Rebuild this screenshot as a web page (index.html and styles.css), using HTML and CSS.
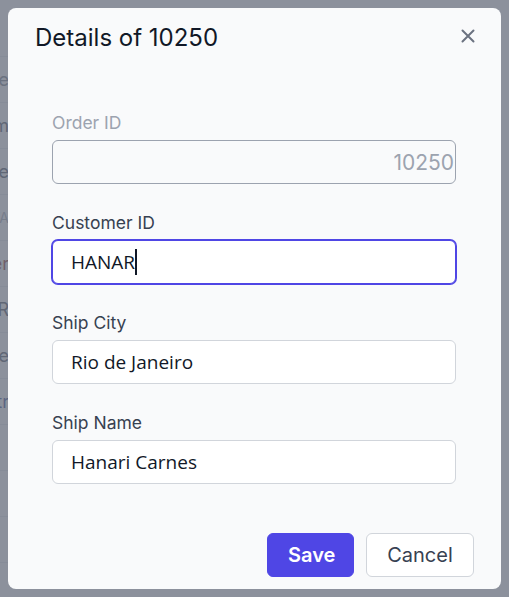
FILE: index.html
```html
<!DOCTYPE html>
<html lang="en">
<head>
<meta charset="utf-8">
<title>Details of 10250</title>
<link rel="stylesheet" href="styles.css">
</head>
<body>
<div class="page">
  <div class="grid">
    <div class="row"><span class="cell c-gray">Title</span></div>
    <div class="row"><span class="cell c-dark">Tom</span></div>
    <div class="row"><span class="cell c-dark">Hane</span></div>
    <div class="row"><span class="cell c-light">VICTA</span></div>
    <div class="row"><span class="cell c-red">Suprer</span></div>
    <div class="row"><span class="cell c-dark">HILAR</span></div>
    <div class="row"><span class="cell c-dark">Ernste</span></div>
    <div class="row"><span class="cell c-blue">Centr</span></div>
    <div class="row"><span class="cell c-dark"></span></div>
    <div class="row"><span class="cell c-dark"></span></div>
    <div class="row"><span class="cell c-dark"></span></div>
    <div class="row"><span class="cell c-dark"></span></div>
  </div>
</div>
<div class="overlay"></div>
<div class="modal" role="dialog" aria-labelledby="dlg-title">
  <div class="modal-header">
    <h2 id="dlg-title" class="modal-title">Details of 10250</h2>
    <button class="close-btn" aria-label="Close">
      <svg width="14" height="14" viewBox="0 0 14 14" fill="none" stroke="currentColor" stroke-width="2" stroke-linecap="round"><path d="M1.5 1.5L12.5 12.5M12.5 1.5L1.5 12.5"/></svg>
    </button>
  </div>
  <form class="modal-body">
    <div class="field">
      <label class="label label-disabled" for="f-order">Order ID</label>
      <input id="f-order" class="input input-disabled input-num" value="10250" disabled>
    </div>
    <div class="field">
      <label class="label" for="f-cust">Customer ID</label>
      <div class="input input-focus"><span class="val">HANAR</span><span class="caret"></span></div>
    </div>
    <div class="field">
      <label class="label" for="f-city">Ship City</label>
      <input id="f-city" class="input" value="Rio de Janeiro">
    </div>
    <div class="field">
      <label class="label" for="f-name">Ship Name</label>
      <input id="f-name" class="input" value="Hanari Carnes">
    </div>
  </form>
  <div class="modal-footer">
    <button class="btn btn-primary" type="button">Save</button>
    <button class="btn btn-secondary" type="button">Cancel</button>
  </div>
</div>
</body>
</html>
```
FILE: styles.css
```css
* { box-sizing: border-box; }
html, body { margin: 0; padding: 0; }
body {
  width: 509px;
  height: 597px;
  overflow: hidden;
  font-family: Inter, "Noto Sans", sans-serif;
  background: #ffffff;
  position: relative;
}
.page { padding-top: 56px; }
.grid { width: 9px; }
.row {
  height: 46px;
  border-top: 1px solid #e5e7eb;
  display: flex;
  justify-content: flex-end;
  align-items: center;
  overflow: hidden;
  white-space: nowrap;
}
.cell { font-size: 18px; }
.c-gray { color: #6b7280; }
.c-dark { color: #374151; }
.c-light { color: #9ca3af; font-size: 14px; }
.c-red { color: #7f1d1d; }
.c-blue { color: #1e3a8a; }

.overlay {
  position: absolute;
  inset: 0;
  background: rgba(107, 114, 128, 0.78);
}
.modal {
  position: absolute;
  left: 8px;
  top: 8px;
  width: 493px;
  height: 581px;
  background: #f9fafb;
  border-radius: 8px;
  display: flex;
  flex-direction: column;
}
.modal-header {
  display: flex;
  justify-content: space-between;
  align-items: flex-start;
  padding: 14px 26px 0 27px;
  height: 46px;
}
.modal-title {
  margin: 0;
  font-size: 24px;
  font-weight: 400;
  line-height: 32px;
  color: #111827;
}
.close-btn {
  border: 0;
  background: none;
  padding: 0;
  margin-top: 7px;
  width: 14px;
  height: 14px;
  color: #6b7280;
  display: flex;
}
.modal-body {
  margin: 0;
  padding: 57px 45px 0 44px;
  display: flex;
  flex-direction: column;
  gap: 27px;
}
.field { display: flex; flex-direction: column; gap: 5px; }
.label {
  font-size: 17.5px;
  line-height: 24px;
  color: #374151;
}
.label-disabled { color: #9ca3af; }
.input {
  width: 404px;
  height: 44px;
  border: 1px solid #d1d5db;
  border-radius: 6px;
  background: #ffffff;
  padding: 0 18px;
  font-family: "Comic Sans MS", "Open Sans", sans-serif;
  font-size: 19px;
  color: #111827;
  outline: none;
  display: flex;
  align-items: center;
}
.input-disabled {
  background: #f9fafb;
  border-color: #9ca3af;
  color: #9ca3af;
}
.input-num {
  font-family: Inter, "Noto Sans", sans-serif;
  font-size: 21px;
  text-align: right;
  padding-right: 1px;
}
.input-focus {
  border-color: #4f46e5;
  box-shadow: 0 0 0 1px #4f46e5;
}
.caret {
  display: inline-block;
  width: 2px;
  height: 26px;
  background: #111827;
}
.modal-footer {
  margin-top: auto;
  display: flex;
  justify-content: flex-end;
  gap: 12px;
  padding: 0 27px 12px;
}
.btn {
  height: 44px;
  border-radius: 6px;
  font-family: Inter, "Noto Sans", sans-serif;
  font-size: 20px;
  padding: 0 20px;
}
.btn-primary {
  width: 87px;
  background: #4f46e5;
  border: 1px solid #4f46e5;
  color: #ffffff;
  font-weight: 600;
}
.btn-secondary {
  width: 108px;
  background: #ffffff;
  border: 1px solid #d1d5db;
  color: #374151;
}
```
